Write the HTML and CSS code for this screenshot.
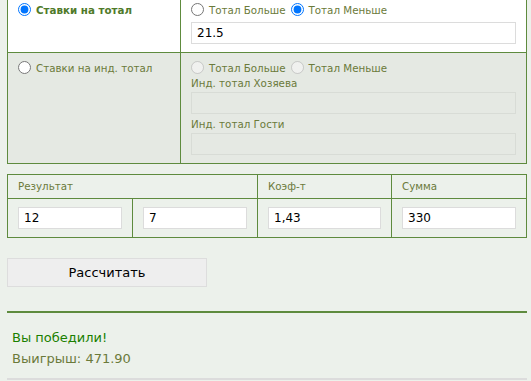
FILE: index.html
```html
<!DOCTYPE html>
<html lang="ru">
<head>
<meta charset="utf-8">
<title>Калькулятор ставок</title>
<link rel="stylesheet" href="styles.css">
</head>
<body>
<div class="page">
  <div class="bets">
    <div class="cell active">
      <div class="radio-row"><input type="radio" name="mode" checked><span class="strong">Ставки на тотал</span></div>
    </div>
    <div class="cell active">
      <div class="radio-row"><input type="radio" name="tt"><span>Тотал Больше</span><input type="radio" name="tt" class="second" checked><span>Тотал Меньше</span></div>
      <input type="text" class="field field-first" value="21.5">
    </div>
    <div class="cell muted">
      <div class="radio-row"><input type="radio" name="mode"><span>Ставки на инд. тотал</span></div>
    </div>
    <div class="cell muted">
      <div class="radio-row"><input type="radio" name="it" disabled><span>Тотал Больше</span><input type="radio" name="it" class="second" disabled><span>Тотал Меньше</span></div>
      <label class="field-label">Инд. тотал Хозяева</label>
      <input type="text" class="field" disabled>
      <label class="field-label">Инд. тотал Гости</label>
      <input type="text" class="field" disabled>
    </div>
  </div>

  <div class="result">
    <div class="head span2">Результат</div>
    <div class="head">Коэф-т</div>
    <div class="head">Сумма</div>
    <div class="val"><input type="text" class="field" value="12"></div>
    <div class="val"><input type="text" class="field" value="7"></div>
    <div class="val"><input type="text" class="field" value="1,43"></div>
    <div class="val"><input type="text" class="field" value="330"></div>
  </div>

  <button class="calc" type="button">Рассчитать</button>

  <div class="outcome">
    <div class="win">Вы победили!</div>
    <div class="payout">Выигрыш: 471.90</div>
  </div>
  <div class="footer"></div>
</div>
</body>
</html>
```
FILE: styles.css
```css
html, body {
  margin: 0;
  padding: 0;
  background: #ecf1eb;
}
body {
  font-family: "DejaVu Sans", Verdana, sans-serif;
  font-size: 10.3px;
  color: #6b7a3a;
  overflow: hidden;
}
.page {
  padding: 0 4px 0 7px;
}
.bets {
  margin-top: -6px;
  width: 520px;
  box-sizing: border-box;
  display: grid;
  grid-template-columns: 172px 345px;
  gap: 1px;
  padding: 1px;
  background: #5e8b3e;
}
.cell {
  padding: 7px 10px 6px;
}
.cell.active {
  background: #ffffff;
}
.cell.muted {
  background: #e5e9e3;
}
.radio-row {
  display: flex;
  align-items: center;
  height: 15px;
  white-space: nowrap;
}
.radio-row input {
  margin: 0 5px 0 0;
  width: 13px;
  height: 13px;
  flex: none;
}
.radio-row input.second {
  margin-left: 5px;
}
.strong {
  font-weight: bold;
  color: #4f7a2a;
}
.field {
  display: block;
  box-sizing: border-box;
  width: 100%;
  height: 22px;
  margin: 0 0 2px;
  padding: 0 4px 0 5px;
  border: 1px solid #dcdcdc;
  background: #ffffff;
  font-family: "DejaVu Sans", Verdana, sans-serif;
  font-size: 12px;
  color: #000;
  outline: none;
}
.field-first {
  margin-top: 5px;
}
.field:disabled {
  background: #e5e9e3;
  border-color: #d8dcd6;
}
.field-label {
  display: block;
  line-height: 17px;
}
.result {
  margin-top: 10px;
  width: 520px;
  box-sizing: border-box;
  display: grid;
  grid-template-columns: 124px 124px 133px 134px;
  gap: 1px;
  padding: 1px;
  background: #5e8b3e;
}
.result > div {
  background: #ecf1eb;
}
.result .head {
  height: 23px;
  padding: 0 10px;
  line-height: 23px;
}
.result .span2 {
  grid-column: span 2;
}
.result .val {
  padding: 8px 10px;
}
.result .val .field {
  margin: 0;
}
.calc {
  display: block;
  margin-top: 20px;
  width: 200px;
  height: 29px;
  background: #eeeeee;
  border: 1px solid #dddddd;
  font-family: "DejaVu Sans", Verdana, sans-serif;
  font-size: 13px;
  color: #000;
  padding: 0;
}
.outcome {
  margin-top: 24px;
  width: 520px;
  border-top: 2px solid #5e8b3e;
  padding: 14px 5px 9px;
  box-sizing: border-box;
  font-size: 13px;
  line-height: 21px;
}
.win {
  color: #1a8000;
}
.payout {
  color: #6b7a3a;
}
.footer {
  width: 520px;
  border-top: 2px solid #dcdcdc;
}
```
